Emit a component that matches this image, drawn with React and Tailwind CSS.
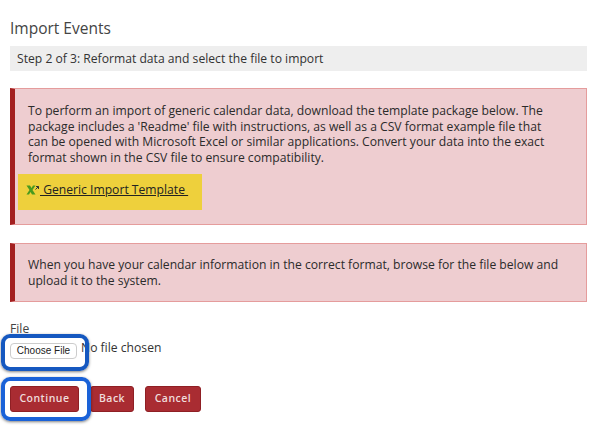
const font = "font-['Open_Sans',sans-serif]"

function ExcelIcon() {
  return (
    <svg width="14" height="12" viewBox="0 0 14 12" className="shrink-0">
      <path d="M0.500 1.500h3.500l1.500 2.500L7 1.500h2.500L6.500 6l3 4.500H6L4.500 8 3 10.500H0.500L3.500 6z" fill="#4a9a1e" />
      <path d="M9.500 5.500l3-3M10 2.500h2.500V5" stroke="#333" strokeWidth="1" fill="none" />
    </svg>
  )
}

export default function App() {
  return (
    <div className={`${font} relative w-[600px] h-[439px] bg-white text-[#333] overflow-hidden`}>
      <div className="pl-[10px] pr-[13px] pt-[18px]">
        <h1 className="text-[15.5px] leading-[20px] text-[#444] h-[28px]">Import Events</h1>

        <div className="h-[25px] bg-[#eeeeee] px-[7px] text-[12.15px] leading-[25px]">
          Step 2 of 3: Reformat data and select the file to import
        </div>

        <div className="mt-[17px] h-[137px] bg-[#eecdd0] border border-[#e59c9c] border-l-[5px] border-l-[#a32020] pl-[13px] pr-[24px] pt-[14px] text-[12.15px] leading-[15.7px] text-[#2b2b2b]">
          <p>
            To perform an import of generic calendar data, download the template package below. The package includes a 'Readme' file with instructions, as well as a CSV format example file that can be opened with Microsoft Excel or similar applications. Convert your data into the exact format shown in the CSV file to ensure compatibility.
          </p>
          <div className="mt-[8px] -ml-[10px] w-[184px] h-[36px] bg-[#eed03c] flex items-center pl-[8px] pb-[4px]">
            <a className="flex items-center underline text-[12.15px] text-[#222]">
              <ExcelIcon />
              <span className="whitespace-pre"> Generic Import Template </span>
            </a>
          </div>
        </div>

        <div className="mt-[18px] h-[59px] bg-[#eecdd0] border border-[#e59c9c] border-l-[5px] border-l-[#a32020] pl-[13px] pr-[24px] pt-[13px] text-[12.15px] leading-[15.7px] text-[#2b2b2b]">
          When you have your calendar information in the correct format, browse for the file below and upload it to the system.
        </div>

        <div className="mt-[19px] text-[12.15px] leading-[16px] text-[#444]">File</div>
        <div className="flex items-center h-[20px] mt-[1px]">
          <button className="w-[67px] h-[16px] mt-[6px] bg-white border border-[#ccc] rounded-[4px] font-['Liberation_Sans',sans-serif] text-[10px] leading-none text-[#222]">
            Choose File
          </button>
          <span className="ml-[4px] text-[12.15px] text-[#333]">No file chosen</span>
        </div>

        <div className="flex gap-[11px] mt-[28px]">
          <button className="w-[69px] h-[26px] bg-[#a92c32] border border-[#8f1f24] rounded-[3px] text-[10.5px] font-semibold tracking-[0.5px] text-[#f0dcdc]">Continue</button>
          <button className="w-[44px] h-[26px] bg-[#a92c32] border border-[#8f1f24] rounded-[3px] text-[10.5px] font-semibold tracking-[0.5px] text-[#f0dcdc]">Back</button>
          <button className="w-[56px] h-[26px] bg-[#a92c32] border border-[#8f1f24] rounded-[3px] text-[10.5px] font-semibold tracking-[0.5px] text-[#f0dcdc]">Cancel</button>
        </div>
      </div>

      {/* callouts drawn over the screenshot */}
      <div className="absolute left-[1px] top-[334px] w-[88px] h-[37px] border-[4px] border-[#1558c0] rounded-[9px] shadow-[0_1px_3px_rgba(0,0,0,0.5)]" />
      <div className="absolute left-[1px] top-[377px] w-[90px] h-[44px] border-[4px] border-[#1a62d8] rounded-[9px] shadow-[0_1px_3px_rgba(0,0,0,0.5)]" />
    </div>
  )
}
